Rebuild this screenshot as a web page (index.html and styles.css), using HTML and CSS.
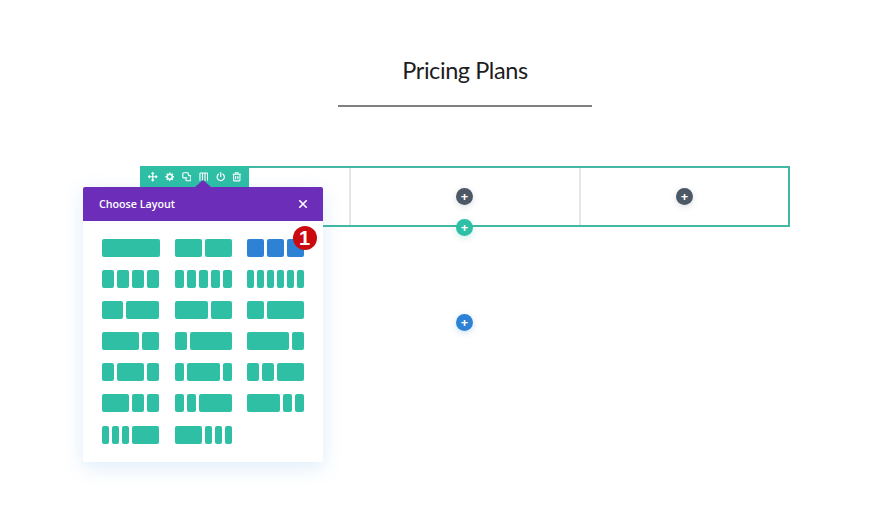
FILE: index.html
```html
<!DOCTYPE html>
<html lang="en">
<head>
<meta charset="utf-8">
<title>Pricing Plans</title>
<link rel="stylesheet" href="styles.css">
</head>
<body>
<main class="page">
  <header class="heading">
    <h1 class="title">Pricing Plans</h1>
    <div class="rule"></div>
  </header>

  <section class="row">
    <div class="column"><span class="add add-dark">+</span></div>
    <div class="column"><span class="add add-dark">+</span></div>
    <div class="column"><span class="add add-dark">+</span></div>
    <span class="add add-teal add-row">+</span>

    <div class="toolbar">
      <svg class="tool" viewBox="0 0 12 12"><path d="M6 .8v10.4M.8 6h10.4M4.4 2.4 6 .8l1.6 1.6M4.4 9.6 6 11.2l1.6-1.6M2.4 4.4.8 6l1.6 1.6M9.6 4.4 11.2 6 9.6 7.6" fill="none" stroke="#fff" stroke-width="1.5"/></svg>
      <svg class="tool" viewBox="0 0 12 12"><circle cx="6" cy="6" r="3.2" fill="none" stroke="#fff" stroke-width="1.8"/><path d="M6 .5v2M6 9.5v2M.5 6h2M9.5 6h2M2.1 2.1l1.4 1.4M8.5 8.5l1.4 1.4M2.1 9.9l1.4-1.4M8.5 3.5l1.4-1.4" stroke="#fff" stroke-width="1.7"/></svg>
      <svg class="tool" viewBox="0 0 12 12"><path d="M6.6 7.4H2a1 1 0 0 1-1-1V2a1 1 0 0 1 1-1h5a1 1 0 0 1 1 1v2.2" fill="none" stroke="#fff" stroke-width="1.4"/><path d="M8 4.6h2.2a1 1 0 0 1 1 1V10a1 1 0 0 1-1 1H6a1 1 0 0 1-1-1V8" fill="none" stroke="#fff" stroke-width="1.4"/></svg>
      <svg class="tool" viewBox="0 0 12 12"><path d="M1.2 11V2a.8.8 0 0 1 .8-.8h8a.8.8 0 0 1 .8.8v9M4.4 1.5V11M7.6 1.5V11" fill="none" stroke="#fff" stroke-width="1.4"/></svg>
      <svg class="tool" viewBox="0 0 12 12"><path d="M3.4 2.6a4.6 4.6 0 1 0 5.2 0M6 .8v5" fill="none" stroke="#fff" stroke-width="1.5" stroke-linecap="round"/></svg>
      <svg class="tool" viewBox="0 0 12 12"><path d="M.8 2.8h10.4M4.2 2.6V1h3.6v1.6M2 3v7.4a.8.8 0 0 0 .8.8h6.4a.8.8 0 0 0 .8-.8V3M4.6 5v4M7.4 5v4" fill="none" stroke="#fff" stroke-width="1.4"/></svg>
    </div>

    <aside class="modal">
      <span class="notch"></span>
      <div class="modal-head">
        <span class="modal-title">Choose Layout</span>
        <svg class="close" viewBox="0 0 10 10"><path d="M1.3 1.3l7.4 7.4M8.7 1.3 1.3 8.7" stroke="#fff" stroke-width="1.6"/></svg>
      </div>
      <div class="layouts">
        <div class="layout"><i class="f1"></i></div>
        <div class="layout"><i class="f12"></i><i class="f12"></i></div>
        <div class="layout active"><i class="f13"></i><i class="f13"></i><i class="f13"></i><span class="badge">1</span></div>

        <div class="layout"><i class="f14"></i><i class="f14"></i><i class="f14"></i><i class="f14"></i></div>
        <div class="layout"><i class="f15"></i><i class="f15"></i><i class="f15"></i><i class="f15"></i><i class="f15"></i></div>
        <div class="layout"><i class="f16"></i><i class="f16"></i><i class="f16"></i><i class="f16"></i><i class="f16"></i><i class="f16"></i></div>

        <div class="layout"><i class="f25"></i><i class="f35"></i></div>
        <div class="layout"><i class="f35"></i><i class="f25"></i></div>
        <div class="layout"><i class="f13"></i><i class="f23"></i></div>

        <div class="layout"><i class="f23"></i><i class="f13"></i></div>
        <div class="layout"><i class="f14"></i><i class="f34"></i></div>
        <div class="layout"><i class="f34"></i><i class="f14"></i></div>

        <div class="layout"><i class="f14"></i><i class="f12"></i><i class="f14"></i></div>
        <div class="layout"><i class="f15"></i><i class="f35"></i><i class="f15"></i></div>
        <div class="layout"><i class="f14"></i><i class="f14"></i><i class="f12"></i></div>

        <div class="layout"><i class="f12"></i><i class="f14"></i><i class="f14"></i></div>
        <div class="layout"><i class="f15"></i><i class="f15"></i><i class="f35"></i></div>
        <div class="layout"><i class="f35"></i><i class="f15"></i><i class="f15"></i></div>

        <div class="layout"><i class="f16"></i><i class="f16"></i><i class="f16"></i><i class="f12"></i></div>
        <div class="layout"><i class="f12"></i><i class="f16"></i><i class="f16"></i><i class="f16"></i></div>
      </div>
    </aside>
  </section>

  <div class="section-add"><span class="add add-blue">+</span></div>
</main>
</body>
</html>
```

FILE: styles.css
```css
* { box-sizing: border-box; }
html, body { margin: 0; padding: 0; background: #fff; }
body { width: 880px; height: 524px; overflow: hidden; font-family: "Open Sans", "Liberation Sans", sans-serif; }

.page { display: flex; flex-direction: column; align-items: flex-start; padding: 56px 0 0 140px; }

.heading { width: 650px; display: flex; flex-direction: column; align-items: center; }
.title { margin: 0; font-family: Lato, "Liberation Sans", sans-serif; font-size: 23.5px; letter-spacing: -.42px; line-height: 28px; font-weight: 400; color: #1d1d1d; }
.rule { width: 254px; height: 2px; margin-top: 21px; background: #808080; }

.row { position: relative; display: grid; grid-template-columns: 209px 230px 207px; width: 650px; height: 61px; margin-top: 59px; border: 2px solid #43b8a2; }
.column { display: flex; align-items: center; justify-content: center; border-right: 2px solid #e4e6e8; }
.column:nth-child(2) { padding-right: 1px; }
.column:nth-child(3) { border-right: 0; }

.add { display: flex; align-items: center; justify-content: center; width: 17px; height: 17px; border-radius: 50%; color: #fff; font-size: 13px; font-weight: 700; line-height: 1; }
.add-dark { background: #4c5866; box-shadow: 0 2px 6px rgba(76, 88, 102, .2); }
.add-teal { background: #2ebfa5; box-shadow: 0 2px 6px rgba(46, 191, 165, .25); }
.add-blue { background: #2e82d5; box-shadow: 0 2px 6px rgba(46, 130, 213, .25); }
.add-row { position: absolute; left: 314px; bottom: -11px; }

.section-add { width: 649px; display: flex; justify-content: center; margin-top: 87px; }

.toolbar { position: absolute; left: -2px; top: -2px; width: 109px; height: 21px; display: flex; align-items: center; justify-content: space-between; padding: 1px 7px 0 8px; background: #2ebfa5; border-radius: 2px 0 0 0; }
.tool { width: 9.5px; height: 9.5px; display: block; }

.modal { position: absolute; left: -59px; top: 19px; width: 240px; height: 275px; background: #fff; border-radius: 2px; box-shadow: 0 5px 20px rgba(43, 135, 218, .16); }
.notch { position: absolute; left: 112px; top: -7px; width: 0; height: 0; border-left: 8px solid transparent; border-right: 8px solid transparent; border-bottom: 7px solid #6c2eb9; }
.modal-head { display: flex; align-items: center; justify-content: space-between; height: 34px; padding: 0 15px 0 16px; background: #6c2eb9; border-radius: 2px 2px 0 0; }
.modal-title { color: #fff; font-size: 10.7px; font-weight: 600; }
.close { width: 10px; height: 10px; display: block; }

.layouts { display: grid; grid-template-columns: repeat(3, 57.5px); column-gap: 15px; row-gap: 13.1px; padding: 18px 0 0 19px; }
.layout { position: relative; display: flex; gap: 2.7px; height: 18px; --full: calc(100% + 2.7px); }
.layout i { display: block; flex: none; background: #2ebfa5; border-radius: 2px; }
.layout.active i { background: #2e82d5; }
.f1 { width: 100%; }
.f12 { width: calc(var(--full) / 2 - 2.7px); }
.f13 { width: calc(var(--full) / 3 - 2.7px); }
.f14 { width: calc(var(--full) / 4 - 2.7px); }
.f15 { width: calc(var(--full) / 5 - 2.7px); }
.f16 { width: calc(var(--full) / 6 - 2.7px); }
.f23 { width: calc(var(--full) * 2 / 3 - 2.7px); }
.f25 { width: calc(var(--full) * 2 / 5 - 2.7px); }
.f34 { width: calc(var(--full) * 3 / 4 - 2.7px); }
.f35 { width: calc(var(--full) * 3 / 5 - 2.7px); }

.badge { position: absolute; right: -12px; top: -13px; width: 24px; height: 24px; display: flex; align-items: center; justify-content: center; border-radius: 50%; background: #cb0a10; color: #fff; font-family: "Liberation Sans", sans-serif; font-size: 20px; font-weight: 700; line-height: 1; }
```
